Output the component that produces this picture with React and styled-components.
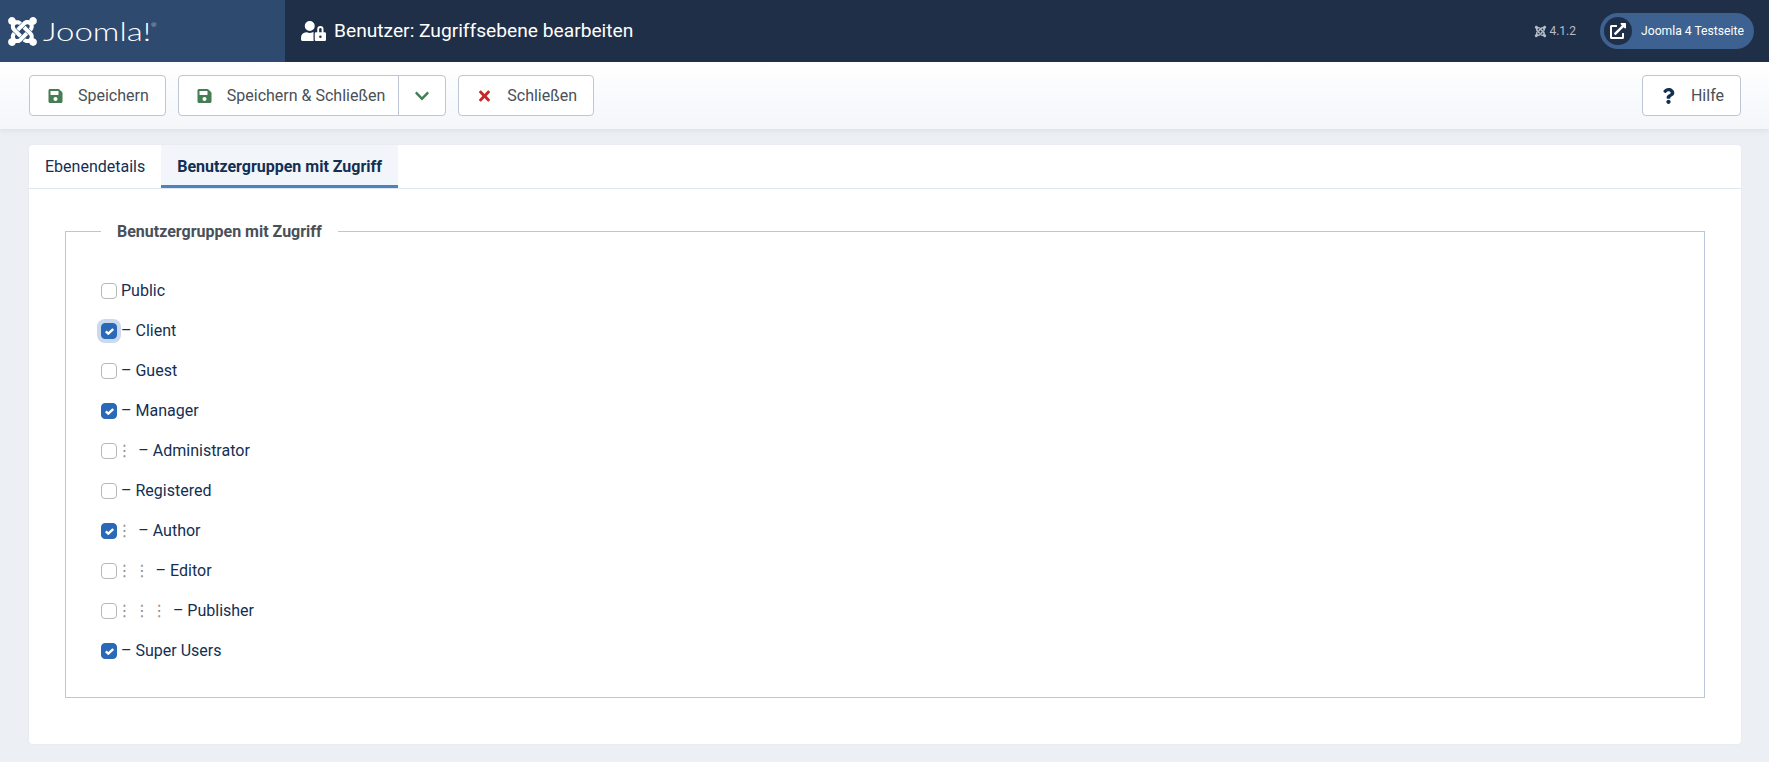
import React from 'react';
import styled, { createGlobalStyle } from 'styled-components';
import { FaJoomla, FaUserLock, FaExternalLinkAlt, FaSave, FaTimes, FaQuestion, FaChevronDown } from 'react-icons/fa';

const GlobalStyle = createGlobalStyle`
  * { box-sizing: border-box; }
  html, body { margin: 0; padding: 0; }
  body {
    background: #ecf0f5;
    font-family: Roboto, "Liberation Sans", sans-serif;
    font-size: 16px;
    line-height: 24px;
    color: #132f53;
  }
`;

const Header = styled.header`
  display: flex;
  align-items: center;
  height: 62px;
  background: #1f2f47;
  color: #fff;
`;

const LogoArea = styled.div`
  display: flex;
  align-items: center;
  gap: 6px;
  width: 285px;
  height: 100%;
  padding-left: 8px;
  background: #2e4a6f;
`;

const LogoMark = styled(FaJoomla)`
  width: 29px;
  height: 33px;
`;

const LogoText = styled.span`
  font-family: Lato, sans-serif;
  font-weight: 300;
  font-size: 25px;
  line-height: 28px;
  transform: scaleX(1.32);
  transform-origin: left center;
  sup {
    font-size: 5px;
    line-height: 0;
    vertical-align: 14px;
  }
`;

const Title = styled.h1`
  display: flex;
  align-items: center;
  gap: 8px;
  margin: 0 0 0 16px;
  font-size: 19.2px;
  font-weight: 400;
  line-height: 24px;
`;

const TitleIcon = styled(FaUserLock)`
  width: 25px;
  height: 20px;
`;

const HeaderRight = styled.div`
  display: flex;
  align-items: center;
  gap: 24px;
  margin-left: auto;
  padding-right: 15px;
`;

const Version = styled.span`
  display: flex;
  align-items: center;
  gap: 2px;
  font-size: 12px;
  color: #b4bdca;
`;

const SitePill = styled.a`
  display: flex;
  align-items: center;
  gap: 9px;
  width: 154px;
  height: 36px;
  padding-left: 4px;
  border-radius: 18px;
  background: #3d6190;
  color: #fff;
  font-size: 12.16px;
`;

const PillCircle = styled.span`
  display: flex;
  align-items: center;
  justify-content: center;
  width: 28px;
  height: 28px;
  border-radius: 50%;
  background: #1f2f47;
  font-size: 16px;
`;

const Toolbar = styled.div`
  display: flex;
  gap: 12px;
  padding: 13px 28px 13px 29px;
  background: linear-gradient(#ffffff, #f4f6fa);
  box-shadow: 0 1px 6px rgba(60, 80, 110, 0.12);
`;

const Button = styled.button`
  display: flex;
  align-items: center;
  gap: 15px;
  height: 41px;
  padding: 0 16px 0 18px;
  border: 1px solid #bcc6d6;
  border-radius: 4px;
  background: #fff;
  font: inherit;
  color: #495057;
  ${({ $right }) => $right && 'margin-left: auto;'}
`;

const SplitButton = styled(Button)`
  padding-right: 13px;
  border-radius: 4px 0 0 4px;
`;

const SplitToggle = styled(Button)`
  width: 48px;
  justify-content: center;
  padding: 0;
  margin-left: -1px;
  border-radius: 0 4px 4px 0;
  color: #457d54;
`;

const SplitGroup = styled.div`
  display: flex;
`;

const ActionIcon = styled.span`
  display: flex;
  width: 15px;
  justify-content: center;
  font-size: 16px;
  color: ${({ $color }) => $color};
`;

const Card = styled.main`
  margin: 16px 28px 19px 29px;
  background: #fff;
  border-radius: 4px;
  box-shadow: 0 0 3px rgba(60, 80, 110, 0.05);
`;

const TabBar = styled.div`
  display: flex;
  height: 44px;
  border-bottom: 1px solid #dee6ef;
`;

const Tab = styled.button`
  height: 43px;
  padding: 3px 16px 0;
  border: 0;
  border-bottom: 3px solid ${({ $active }) => ($active ? '#4f81c0' : 'transparent')};
  background: ${({ $active }) => ($active ? '#f2f6fa' : 'transparent')};
  font: inherit;
  font-weight: ${({ $active }) => ($active ? 700 : 400)};
  color: #132f53;
`;

const TabPanel = styled.div`
  padding: 30px 36px 46px 36px;
`;

const Fieldset = styled.fieldset`
  margin: 0;
  padding: 27px 35px 26px;
  border: 1px solid #b9c6dc;
`;

const Legend = styled.legend`
  padding: 1px 16px 0;
  font-weight: 700;
  color: #495057;
`;

const Row = styled.label`
  display: flex;
  align-items: center;
  height: 40px;
`;

const Box = styled.span`
  display: flex;
  align-items: center;
  justify-content: center;
  flex: none;
  width: 16px;
  height: 16px;
  margin-right: 4px;
  border-radius: 4px;
  border: 1px solid ${({ $checked }) => ($checked ? '#2a69b8' : '#b8b8b8')};
  background: ${({ $checked }) => ($checked ? '#2a69b8' : '#fff')};
  ${({ $focus }) => $focus && 'box-shadow: 0 0 0 4px rgba(42, 105, 184, 0.25);'}
`;

const Indent = styled.span`
  display: inline-block;
  width: 17.3px;
  flex: none;
  text-indent: -4.4px;
  color: #8f8f8f;
  font-family: "DejaVu Sans", sans-serif;
  font-size: 16px;
`;

const CheckMark = () => (
  <svg width="9" height="7" viewBox="0 0 9 7" fill="none" stroke="#fff" strokeWidth="2.4">
    <path d="M.8 3.4l2.5 2.2L8.2 1" />
  </svg>
);

const groups = [
  { name: 'Public', top: true },
  { name: 'Client', level: 0, checked: true, focus: true },
  { name: 'Guest', level: 0 },
  { name: 'Manager', level: 0, checked: true },
  { name: 'Administrator', level: 1 },
  { name: 'Registered', level: 0 },
  { name: 'Author', level: 1, checked: true },
  { name: 'Editor', level: 2 },
  { name: 'Publisher', level: 3 },
  { name: 'Super Users', level: 0, checked: true },
];

const App = () => (
  <>
    <GlobalStyle />
    <Header>
      <LogoArea>
        <LogoMark />
        <LogoText>Joomla!<sup>®</sup></LogoText>
      </LogoArea>
      <Title>
        <TitleIcon />
        Benutzer: Zugriffsebene bearbeiten
      </Title>
      <HeaderRight>
        <Version><FaJoomla size={13} /> 4.1.2</Version>
        <SitePill>
          <PillCircle><FaExternalLinkAlt /></PillCircle>
          Joomla 4 Testseite
        </SitePill>
      </HeaderRight>
    </Header>
    <Toolbar>
      <Button>
        <ActionIcon $color="#457d54"><FaSave /></ActionIcon>
        Speichern
      </Button>
      <SplitGroup>
        <SplitButton>
          <ActionIcon $color="#457d54"><FaSave /></ActionIcon>
          Speichern &amp; Schließen
        </SplitButton>
        <SplitToggle><FaChevronDown size={16} /></SplitToggle>
      </SplitGroup>
      <Button>
        <ActionIcon $color="#c52827"><FaTimes /></ActionIcon>
        Schließen
      </Button>
      <Button $right>
        <ActionIcon $color="#132f53"><FaQuestion /></ActionIcon>
        Hilfe
      </Button>
    </Toolbar>
    <Card>
      <TabBar>
        <Tab>Ebenendetails</Tab>
        <Tab $active>Benutzergruppen mit Zugriff</Tab>
      </TabBar>
      <TabPanel>
        <Fieldset>
          <Legend>Benutzergruppen mit Zugriff</Legend>
          {groups.map((group) => (
            <Row key={group.name}>
              <Box $checked={group.checked} $focus={group.focus}>
                {group.checked && <CheckMark />}
              </Box>
              {Array.from({ length: group.level || 0 }, (_, i) => (
                <Indent key={i}>⋮</Indent>
              ))}
              {group.top ? group.name : `– ${group.name}`}
            </Row>
          ))}
        </Fieldset>
      </TabPanel>
    </Card>
  </>
);

export default App;
